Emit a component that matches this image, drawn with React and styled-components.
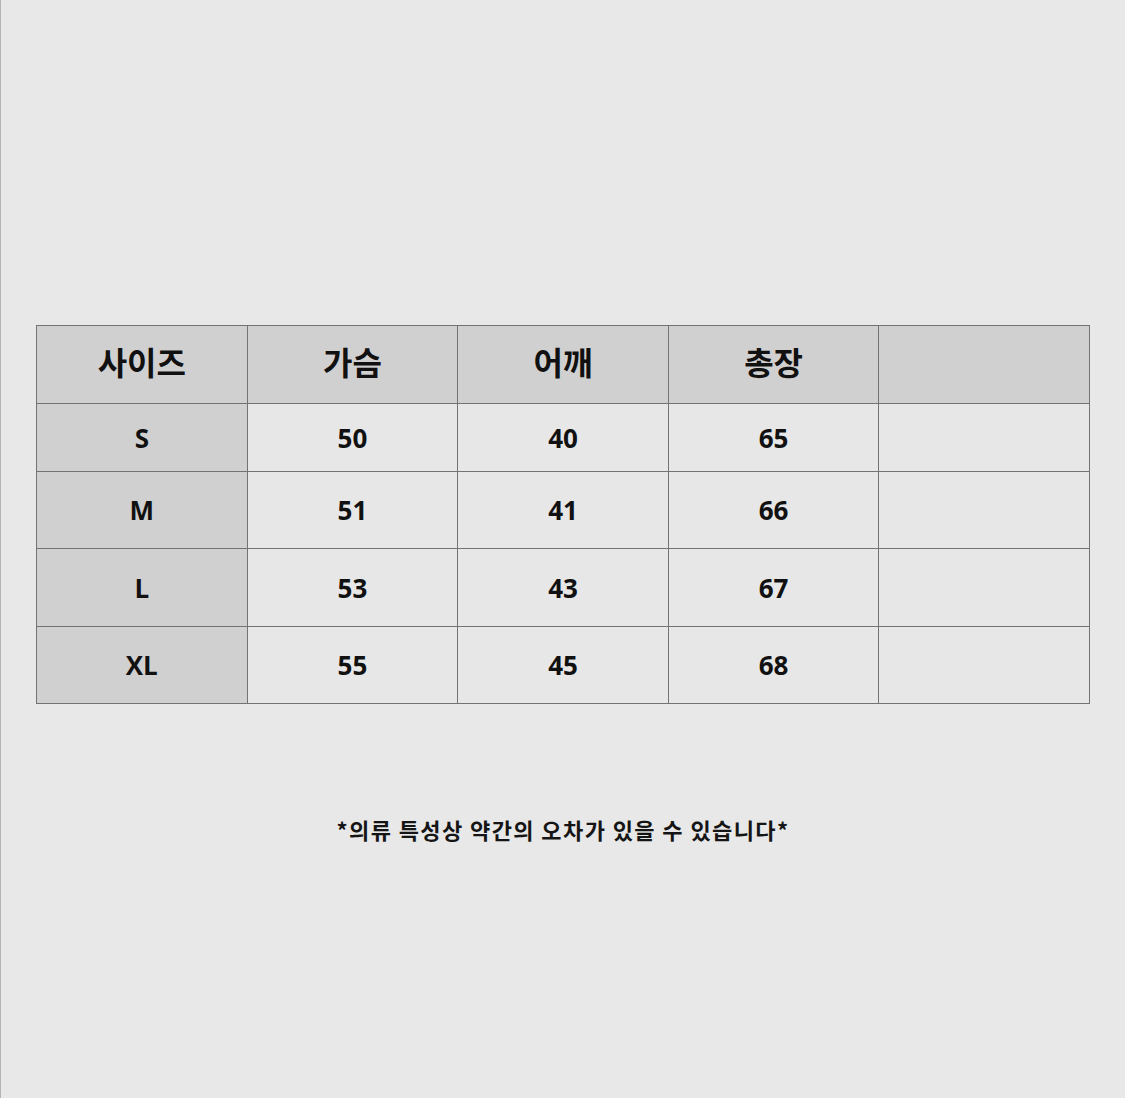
import React from "react";
import styled, { createGlobalStyle } from "styled-components";

const Global = createGlobalStyle`
  html, body { margin: 0; padding: 0; background: #e8e8e8; }
  body { font-family: "Open Sans", "Noto Sans CJK KR", sans-serif; }
`;

const Page = styled.div`
  width: 1125px;
  height: 1098px;
  box-sizing: border-box;
  background: #e8e8e8;
  border-left: 1px solid #b4b4b4;
  padding: 325px 35px 0 35px;
  display: flex;
  flex-direction: column;
  align-items: stretch;
`;

const Table = styled.div`
  display: grid;
  grid-template-columns: repeat(5, 1fr);
  grid-template-rows: 78px 68px 77px 78px 77px;
  border-top: 1px solid #737373;
  border-left: 1px solid #737373;
  width: 1054px;
  box-sizing: border-box;
`;

const Cell = styled.div`
  display: flex;
  align-items: center;
  justify-content: center;
  box-sizing: border-box;
  border-right: 1px solid #737373;
  border-bottom: 1px solid #737373;
  background: ${(p) => (p.$shade ? "#d1d0d1" : "#e7e7e7")};
  color: #111;
  font-weight: 700;
  font-size: ${(p) => (p.$head ? "32px" : "26px")};
  font-family: ${(p) =>
    p.$head ? '"Noto Sans CJK KR", sans-serif' : '"Open Sans", "Noto Sans CJK KR", sans-serif'};
  padding-bottom: ${(p) => (p.$head ? "8px" : "0")};
`;

const Note = styled.div`
  margin-top: 110px;
  text-align: center;
  font-family: "Noto Sans CJK KR", sans-serif;
  font-weight: 700;
  font-size: 22px;
  letter-spacing: 1.4px;
  color: #151515;
  line-height: 30px;
`;

const header = ["사이즈", "가슴", "어깨", "총장", ""];
const rows = [
  ["S", "50", "40", "65", ""],
  ["M", "51", "41", "66", ""],
  ["L", "53", "43", "67", ""],
  ["XL", "55", "45", "68", ""],
];

export default function App() {
  return (
    <>
      <Global />
      <Page>
        <Table>
          {header.map((h, i) => (
            <Cell key={"h" + i} $head $shade>
              {h}
            </Cell>
          ))}
          {rows.map((r, ri) =>
            r.map((c, ci) => (
              <Cell key={ri + "-" + ci} $shade={ci === 0}>
                {c}
              </Cell>
            ))
          )}
        </Table>
        <Note>*의류 특성상 약간의 오차가 있을 수 있습니다*</Note>
      </Page>
    </>
  );
}
